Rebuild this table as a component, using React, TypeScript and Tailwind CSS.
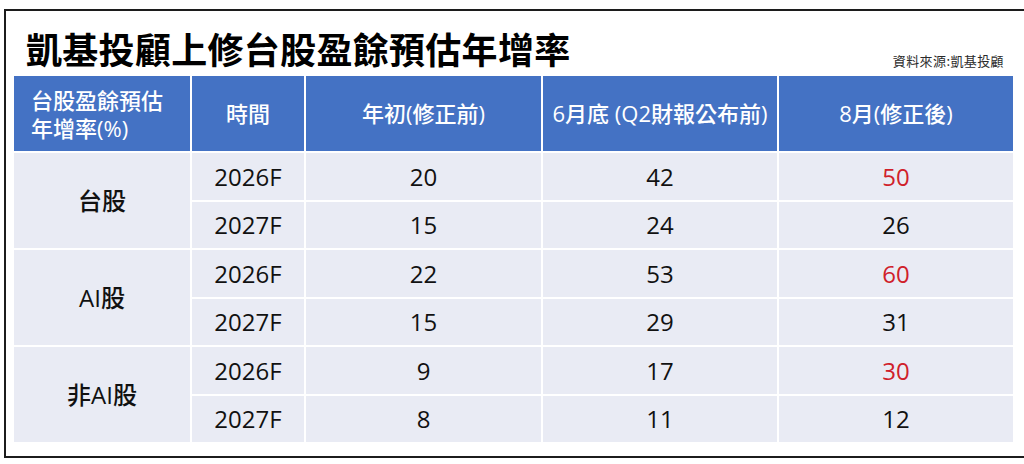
import React from "react";

const font = { fontFamily: '"Open Sans", "Noto Sans CJK TC", sans-serif' };

type Row = { year: string; a: string; b: string; c: string };
type Group = { name: string; rows: Row[] };

const groups: Group[] = [
  { name: "台股", rows: [ { year: "2026F", a: "20", b: "42", c: "50" }, { year: "2027F", a: "15", b: "24", c: "26" } ] },
  { name: "AI股", rows: [ { year: "2026F", a: "22", b: "53", c: "60" }, { year: "2027F", a: "15", b: "29", c: "31" } ] },
  { name: "非AI股", rows: [ { year: "2026F", a: "9", b: "17", c: "30" }, { year: "2027F", a: "8", b: "11", c: "12" } ] },
];

export default function App() {
  return (
    <div className="w-[1024px] h-[464px] bg-white overflow-hidden pt-[9px] pl-[4px]" style={font}>
      <div className="w-[1040px] h-[449px] border-2 border-[#1c1c1c] pl-[8px]">
        <div className="w-[999px] h-[65px] flex justify-between items-end">
          <div className="self-start pt-[19px] pl-[12px] text-[36px] leading-[36px] font-bold text-black tracking-[0.3px]" style={{ fontFamily: '"Noto Sans CJK TC", sans-serif' }}>
            凱基投顧上修台股盈餘預估年增率
          </div>
          <div className="pb-[9px] pr-[9px] text-[13px] leading-[13px] tracking-[0.4px] text-[#2a2a2a]" style={{ fontFamily: '"Noto Sans CJK TC", sans-serif' }}>
            資料來源:凱基投顧
          </div>
        </div>
        <div className="w-[999px] grid grid-cols-[176px_112px_235px_234px_234px] grid-rows-[75px_47px_46px_47px_46px_47px_46px] gap-[2px] bg-white font-medium">
          <div className="bg-[#4472c4] text-white text-[22px] leading-[28px] flex flex-col justify-center pl-[17px]">
            <span className="block leading-[28px]">台股盈餘預估</span>
            <span className="block leading-[28px]">年增率(%)</span>
          </div>
          <div className="bg-[#4472c4] text-white text-[22px] flex items-center justify-center">時間</div>
          <div className="bg-[#4472c4] text-white text-[22px] flex items-center justify-center">年初(修正前)</div>
          <div className="bg-[#4472c4] text-white text-[22px] flex items-center justify-center">6月底 (Q2財報公布前)</div>
          <div className="bg-[#4472c4] text-white text-[22px] flex items-center justify-center">8月(修正後)</div>
          {groups.map((g) => (
            <React.Fragment key={g.name}>
              <div className="row-span-2 bg-[#e9ebf4] text-[24px] text-[#111] flex items-center justify-center">{g.name}</div>
              {g.rows.map((r, i) => (
                <React.Fragment key={r.year}>
                  <div className="bg-[#e9ebf4] text-[24px] text-[#111] flex items-center justify-center">{r.year}</div>
                  <div className="bg-[#e9ebf4] text-[24px] text-[#111] flex items-center justify-center">{r.a}</div>
                  <div className="bg-[#e9ebf4] text-[24px] text-[#111] flex items-center justify-center">{r.b}</div>
                  <div className={i === 0 ? "bg-[#e9ebf4] text-[24px] text-[#d0202a] flex items-center justify-center" : "bg-[#e9ebf4] text-[24px] text-[#111] flex items-center justify-center"}>{r.c}</div>
                </React.Fragment>
              ))}
            </React.Fragment>
          ))}
        </div>
      </div>
    </div>
  );
}
